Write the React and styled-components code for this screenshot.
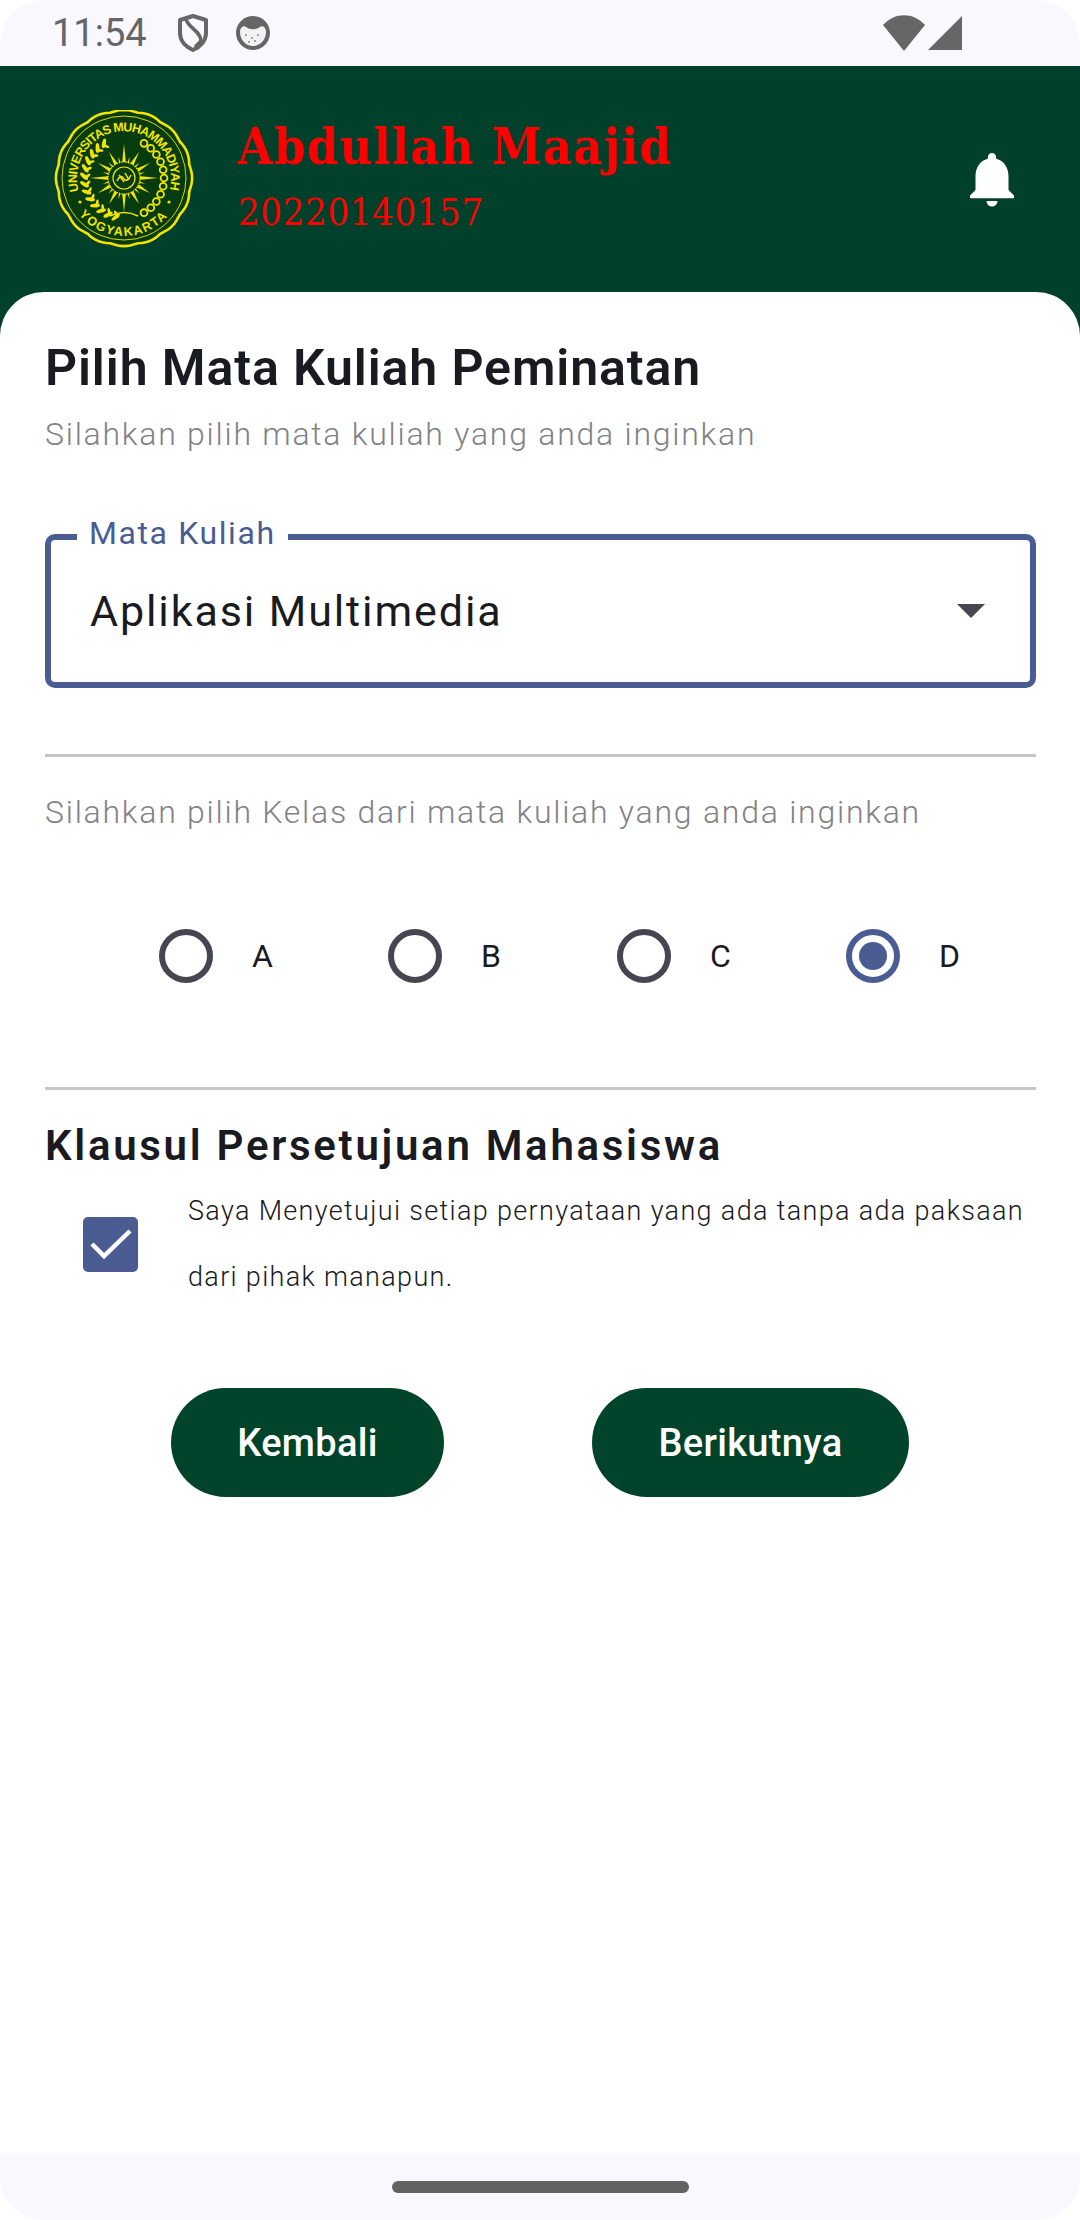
import styled, { createGlobalStyle } from "styled-components";
import { MdNotifications } from "react-icons/md";

const GlobalStyle = createGlobalStyle`
    html, body {
        margin: 0;
        padding: 0;
        background: #ffffff;
    }
    * {
        box-sizing: border-box;
    }
`
const Phone = styled.div`
    width: 1080px;
    height: 2220px;
    display: flex;
    flex-direction: column;
    background: #ffffff;
    font-family: Roboto, "Liberation Sans", sans-serif;
    overflow: hidden;
`
const StatusBar = styled.div`
    height: 66px;
    flex-shrink: 0;
    display: flex;
    align-items: center;
    padding: 0 118px 0 52px;
    background: #f9f8fe;
    border-radius: 44px 44px 0 0;
    color: #666666;
`
const Time = styled.span`
    font-size: 38px;
    line-height: 66px;
    margin-right: 31px;
`
const StatusIcon = styled.svg`
    display: block;
    flex-shrink: 0;
    margin-right: ${(p) => p.$gap || 0}px;
`
const Spacer = styled.div`
    flex: 1;
`
const Header = styled.div`
    height: 226px;
    flex-shrink: 0;
    display: flex;
    align-items: center;
    padding: 0 55px 0 54px;
    background: #01402a;
`
const LogoWrap = styled.svg`
    display: block;
    width: 140px;
    height: 138px;
    flex-shrink: 0;
`
const UserInfo = styled.div`
    flex: 1;
    margin-left: 44px;
    margin-top: -6px;
    color: #ff0000;
    font-family: "DejaVu Serif Condensed", "DejaVu Serif", serif;
`
const UserName = styled.div`
    font-size: 50px;
    line-height: 62px;
    font-weight: 700;
    letter-spacing: 1.3px;
`
const UserId = styled.div`
    font-size: 38px;
    line-height: 50px;
    margin-top: 9px;
    letter-spacing: 0.6px;
`
const Bell = styled(MdNotifications)`
    display: block;
    width: 66px;
    height: 66px;
    color: #ffffff;
`
const HeaderBack = styled.div`
    flex: 1;
    min-width: 0;
    display: flex;
    background: #01402a;
`
const Sheet = styled.div`
    flex: 1;
    min-width: 0;
    padding: 48px 44px 0 45px;
    background: #ffffff;
    border-radius: 44px 44px 0 0;
`
const Title = styled.h1`
    margin: 0;
    font-size: 50px;
    line-height: 56px;
    font-weight: 600;
    color: #1a1b20;
    letter-spacing: 0.9px;
`
const Hint = styled.p`
    margin: ${(p) => p.$top || 0}px 0 0;
    font-size: 32px;
    line-height: 44px;
    font-weight: 300;
    color: #828286;
    letter-spacing: 1.75px;
`
const Field = styled.div`
    position: relative;
    height: 154px;
    margin-top: 78px;
    display: flex;
    align-items: center;
    justify-content: space-between;
    padding: 0 45px 0 39px;
    border: 6px solid #4a5c92;
    border-radius: 10px;
`
const FieldLabel = styled.span`
    position: absolute;
    left: 26px;
    top: -27px;
    padding: 0 12px;
    background: #ffffff;
    font-size: 32px;
    line-height: 40px;
    color: #4a5c92;
    letter-spacing: 1.6px;
`
const FieldValue = styled.span`
    font-size: 43px;
    color: #1a1b20;
    letter-spacing: 1.9px;
`
const Arrow = styled.span`
    width: 0;
    height: 0;
    border-left: 14px solid transparent;
    border-right: 14px solid transparent;
    border-top: 14px solid #45464f;
`
const Divider = styled.div`
    height: 3px;
    background: #c6c6d0;
    margin-top: ${(p) => p.$top}px;
`
const RadioRow = styled.div`
    display: flex;
    height: 54px;
    margin-top: 95px;
    margin-left: 114px;
`
const RadioItem = styled.label`
    flex: 0 0 229px;
    display: flex;
    align-items: center;
    gap: 39px;
    font-size: 32px;
    color: #1a1b20;
`
const RadioCircle = styled.span`
    width: 54px;
    height: 54px;
    flex-shrink: 0;
    display: flex;
    align-items: center;
    justify-content: center;
    border: 6px solid ${(p) => (p.$checked ? "#4a5c92" : "#45464f")};
    border-radius: 50%;
    &::after {
        content: "";
        display: ${(p) => (p.$checked ? "block" : "none")};
        width: 28px;
        height: 28px;
        border-radius: 50%;
        background: #4a5c92;
    }
`
const Subtitle = styled.h2`
    margin: 29px 0 0;
    font-size: 42px;
    line-height: 54px;
    font-weight: 600;
    color: #1a1b20;
    letter-spacing: 2.7px;
`
const Agreement = styled.div`
    display: flex;
    align-items: center;
    margin-top: 5px;
    padding-left: 38px;
`
const CheckBox = styled.span`
    width: 55px;
    height: 55px;
    flex-shrink: 0;
    display: block;
    background: #4a5c92;
    border-radius: 5px;
`
const CheckMark = styled.svg`
    display: block;
`
const AgreementText = styled.p`
    margin: 0 0 0 50px;
    font-size: 27px;
    line-height: 66px;
    font-weight: 300;
    color: #1a1b20;
    letter-spacing: 1.33px;
`
const ButtonRow = styled.div`
    display: flex;
    margin-top: 78px;
    padding-left: 126px;
    gap: 148px;
`
const Button = styled.button`
    width: ${(p) => p.$width}px;
    height: 109px;
    border: 0;
    border-radius: 55px;
    background: #01432b;
    color: #ffffff;
    font-family: inherit;
    font-size: 38px;
    font-weight: 500;
    letter-spacing: 0.3px;
    padding: 0;
`
const NavBar = styled.div`
    height: 66px;
    flex-shrink: 0;
    display: flex;
    justify-content: center;
    padding-top: 27px;
    background: #f9f8fe;
    border-radius: 0 0 44px 44px;
`
const NavPill = styled.div`
    width: 297px;
    height: 12px;
    border-radius: 6px;
    background: #626262;
`

const CX = 70;
const CY = 68;
const GOLD = "#f2e600";
const SEAL = "#073c10";

const polar = (deg, r) => {
    const a = (deg * Math.PI) / 180;
    return [CX + r * Math.sin(a), CY - r * Math.cos(a)];
};

// lekuk pinggir logo
const scallop = (() => {
    const pts = [];
    for (let i = 0; i < 360; i += 3) {
        const r = 66.5 + 1.6 * Math.abs(Math.cos((i * Math.PI * 8) / 180));
        pts.push(polar(i, r).map((n) => n.toFixed(1)).join(","));
    }
    return pts.join(" ");
})();

const rays = Array.from({ length: 24 }, (_, i) => i * 15);
const leaves = Array.from({ length: 13 }, (_, i) => 192 + i * 11.5);
const chain = Array.from({ length: 11 }, (_, i) => 30 + i * 12);

const rayShape = (deg) => {
    if (deg % 90 === 0) return `${CX},${CY - 34} ${CX - 2.2},${CY - 12} ${CX + 2.2},${CY - 12}`;
    if (deg % 30 === 0) return `${CX},${CY - 30} ${CX - 2.4},${CY - 12} ${CX + 2.4},${CY - 12}`;
    return `${CX},${CY - 22} ${CX - 1.4},${CY - 12} ${CX + 1.4},${CY - 12}`;
};

const Logo = () => (
    <LogoWrap viewBox="0 0 140 138">
        <polygon points={scallop} fill={SEAL} stroke={GOLD} strokeWidth="2.6" />
        <circle cx={CX} cy={CY} r="62" fill="none" stroke={GOLD} strokeWidth="0.9" />
        <defs>
            <path id="arcTop" d="M24.8 81 A47 47 0 1 1 115.2 81" />
            <path id="arcBottom" d="M25 104.5 A58 58 0 0 0 115 104.5" />
        </defs>
        <text fontFamily="Liberation Sans, sans-serif" fontSize="12.5" fontWeight="700" fill={GOLD}>
            <textPath href="#arcTop" textLength="172">UNIVERSITAS MUHAMMADIYAH</textPath>
        </text>
        <text fontFamily="Liberation Sans, sans-serif" fontSize="12.5" fontWeight="700" fill={GOLD}>
            <textPath href="#arcBottom" textLength="100">YOGYAKARTA</textPath>
        </text>
        {rays.map((deg) => (
            <polygon key={deg} points={rayShape(deg)} fill={GOLD} transform={`rotate(${deg} ${CX} ${CY})`} />
        ))}
        <circle cx={CX} cy={CY} r="16" fill={SEAL} stroke={GOLD} strokeWidth="1.2" strokeDasharray="1.4 1" />
        <circle cx={CX} cy={CY} r="11" fill={SEAL} stroke={GOLD} strokeWidth="1.2" />
        <path d="M63 71 q4 -8 7 -2 q3 4 7 -4 M65 65 l5 7 M71 63 l4 7" fill="none" stroke={GOLD} strokeWidth="1.5" />
        {leaves.map((deg) => {
            const [x, y] = polar(deg, 40);
            return <ellipse key={deg} cx={x} cy={y} rx="1.9" ry="5" fill={GOLD} transform={`rotate(${deg + 40} ${x} ${y})`} />;
        })}
        {leaves.map((deg) => {
            const [x, y] = polar(deg, 37);
            return <ellipse key={deg} cx={x} cy={y} rx="1.4" ry="4" fill={GOLD} transform={`rotate(${deg - 40} ${x} ${y})`} />;
        })}
        {chain.map((deg) => {
            const [x, y] = polar(deg, 40);
            return <circle key={deg} cx={x} cy={y} r="3.4" fill="none" stroke={GOLD} strokeWidth="1.8" />;
        })}
        <path d="M56 106 q14 -7 28 0" fill="none" stroke={GOLD} strokeWidth="1.4" />
        <circle cx="26" cy="92" r="1.6" fill={GOLD} />
        <circle cx="115" cy="92" r="1.6" fill={GOLD} />
    </LogoWrap>
);

const classes = ["A", "B", "C", "D"];

const App = () => {
    return (
        <Phone>
            <GlobalStyle />
            <StatusBar>
                <Time>11:54</Time>
                <StatusIcon width="30" height="38" viewBox="0 0 30 38" $gap={28}>
                    <path d="M15 2 L28 6 V19 C28 27 22 33 15 36 C8 33 2 27 2 19 V6 Z" fill="none" stroke="#666666" strokeWidth="4" strokeLinejoin="round" />
                    <path d="M8 5 C10 14 23 17 23 27 L17 33" fill="none" stroke="#666666" strokeWidth="3.5" />
                </StatusIcon>
                <StatusIcon width="34" height="34" viewBox="0 0 34 34">
                    <circle cx="17" cy="17" r="17" fill="#666666" />
                    <path d="M4 16 C4 12 7 9 10 11 C14 14 20 14 24 11 C27 9 30 12 30 16 C30 24 24 30 17 30 C10 30 4 24 4 16 Z" fill="#f2f2f4" />
                    <g fill="#8a8a8a">
                        <circle cx="10" cy="19" r="1" />
                        <circle cx="16" cy="22" r="1" />
                        <circle cx="22" cy="19" r="1" />
                        <circle cx="19" cy="25" r="1" />
                        <circle cx="13" cy="26" r="1" />
                    </g>
                </StatusIcon>
                <Spacer />
                <StatusIcon width="42" height="36" viewBox="0 0 42 36" $gap={3}>
                    <path d="M0 10 C12 -3 30 -3 42 10 L21 36 Z" fill="#666666" />
                </StatusIcon>
                <StatusIcon width="34" height="34" viewBox="0 0 34 34">
                    <path d="M34 0 V34 H0 Z" fill="#666666" />
                </StatusIcon>
            </StatusBar>
            <Header>
                <Logo />
                <UserInfo>
                    <UserName>Abdullah Maajid</UserName>
                    <UserId>20220140157</UserId>
                </UserInfo>
                <Bell />
            </Header>
            <HeaderBack>
                <Sheet>
                    <Title>Pilih Mata Kuliah Peminatan</Title>
                    <Hint $top={16}>Silahkan pilih mata kuliah yang anda inginkan</Hint>
                    <Field>
                        <FieldLabel>Mata Kuliah</FieldLabel>
                        <FieldValue>Aplikasi Multimedia</FieldValue>
                        <Arrow />
                    </Field>
                    <Divider $top={66} />
                    <Hint $top={33}>Silahkan pilih Kelas dari mata kuliah yang anda inginkan</Hint>
                    <RadioRow>
                        {classes.map((c) => (
                            <RadioItem key={c}>
                                <RadioCircle $checked={c === "D"} />
                                {c}
                            </RadioItem>
                        ))}
                    </RadioRow>
                    <Divider $top={104} />
                    <Subtitle>Klausul Persetujuan Mahasiswa</Subtitle>
                    <Agreement>
                        <CheckBox>
                            <CheckMark width="55" height="55" viewBox="0 0 55 55">
                                <path d="M9 27 L21 39 L47 14" fill="none" stroke="#ffffff" strokeWidth="4.5" />
                            </CheckMark>
                        </CheckBox>
                        <AgreementText>
                            Saya Menyetujui setiap pernyataan yang ada tanpa ada paksaan dari pihak manapun.
                        </AgreementText>
                    </Agreement>
                    <ButtonRow>
                        <Button $width={273}>Kembali</Button>
                        <Button $width={317}>Berikutnya</Button>
                    </ButtonRow>
                </Sheet>
            </HeaderBack>
            <NavBar>
                <NavPill />
            </NavBar>
        </Phone>
    );
};

export default App;
